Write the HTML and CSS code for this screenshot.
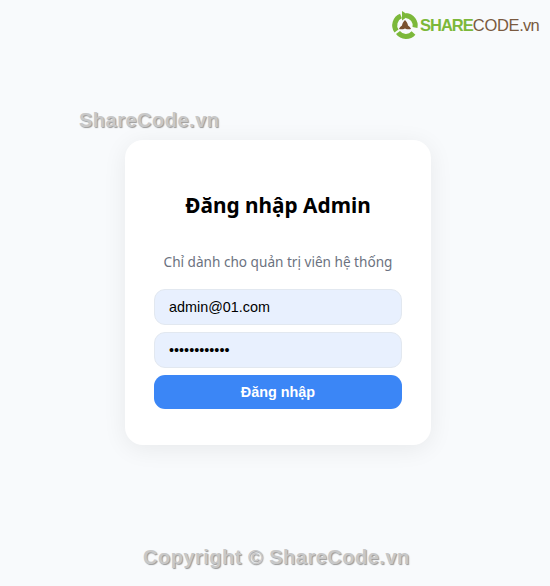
FILE: index.html
```html
<!DOCTYPE html>
<html lang="vi">
<head>
    <meta charset="UTF-8">
    <meta name="viewport" content="width=device-width, initial-scale=1.0">
    <title>Đăng nhập Admin</title>
    <link rel="stylesheet" href="styles.css">
</head>
<body>
    <div class="logo">
        <svg class="logo-icon" width="28" height="28" viewBox="0 0 28 28" fill="none">
            <path d="M5.500 20A10 10 0 0 1 10 5" stroke="#7cb83a" stroke-width="5"/>
            <path d="M11 0l7 4.500-7 5z" fill="#7cb83a"/>
            <path d="M15 4.500A10 10 0 0 1 24 16.500" stroke="#7cb83a" stroke-width="5"/>
            <path d="M22.500 22A10 10 0 0 1 7 21.500" stroke="#7cb83a" stroke-width="5"/>
            <path d="M14 9c1.500 1.300 2.800 3.500 3 5.500 1.300.8 2.500 2 3 3.500-2 .6-4 .4-6-.5-2 .9-4 1.100-6 .5.500-1.500 1.700-2.700 3-3.500.2-2 1.500-4.200 3-5.500z" fill="#7a5230"/>
        </svg>
        <span class="logo-text"><b>SHARE</b><span>CODE</span><i>.vn</i></span>
    </div>

    <div class="watermark watermark-top">ShareCode.vn</div>

    <div class="card">
        <h1>Đăng nhập Admin</h1>
        <p>Chỉ dành cho quản trị viên hệ thống</p>
        <form class="login-form">
            <input type="email" value="admin@01.com">
            <input type="password" value="............">
            <button type="button">Đăng nhập</button>
        </form>
    </div>

    <div class="watermark watermark-bottom">Copyright © ShareCode.vn</div>
</body>
</html>
```

FILE: styles.css
```css
html, body {
    height: 100%;
}

body {
    margin: 0;
    background-color: #f8fafc;
    font-family: "Liberation Sans", Arial, sans-serif;
    position: relative;
    overflow: hidden;
    display: flex;
    flex-direction: column;
    align-items: flex-start;
    padding: 140px 0 0 125px;
    box-sizing: border-box;
}

.logo {
    position: absolute;
    top: 11px;
    left: 391px;
    display: flex;
    align-items: center;
    gap: 1px;
}

.logo-text {
    font-size: 16.500px;
    color: #7a5a40;
}

.logo-text b {
    color: #7cb83a;
    letter-spacing: -1px;
}

.logo-text span {
    letter-spacing: -0.3px;
}

.logo-text i {
    font-style: normal;
    letter-spacing: -0.8px;
}

.watermark {
    position: absolute;
    font-size: 20px;
    font-weight: bold;
    letter-spacing: 0.5px;
    color: #c8c8c8;
    text-shadow: 1px 1px 1px #999;
}

.watermark-top {
    top: 109px;
    left: 79px;
}

.watermark-bottom {
    top: 546px;
    left: 143px;
}

.card {
    width: 306px;
    height: 305px;
    box-sizing: border-box;
    padding: 50px 29px 0;
    background-color: #fff;
    border-radius: 18px;
    box-shadow: 0 4px 24px rgba(0, 0, 0, 0.07);
    text-align: center;
}

.card h1 {
    margin: 0;
    font-family: "Noto Sans", "Open Sans", sans-serif;
    font-size: 20.800px;
    line-height: 30px;
    font-weight: 700;
    color: #000;
}

.card p {
    margin: 32px 0 0;
    font-family: "Noto Sans", "Open Sans", sans-serif;
    font-size: 13.600px;
    line-height: 20px;
    color: #6b7280;
}

.login-form {
    margin-top: 17px;
    display: flex;
    flex-direction: column;
    gap: 7px;
}

.login-form input {
    height: 36px;
    box-sizing: border-box;
    padding: 0 14px;
    border: 1px solid #e2e8f0;
    border-radius: 11px;
    background-color: #e8f0fe;
    font-family: "Liberation Sans", Arial, sans-serif;
    font-size: 14.400px;
    color: #000;
    outline: none;
}

.login-form button {
    height: 34px;
    border: none;
    border-radius: 11px;
    background-color: #3b86f6;
    color: #fff;
    font-family: "Liberation Sans", Arial, sans-serif;
    font-size: 14.400px;
    font-weight: bold;
}
```
